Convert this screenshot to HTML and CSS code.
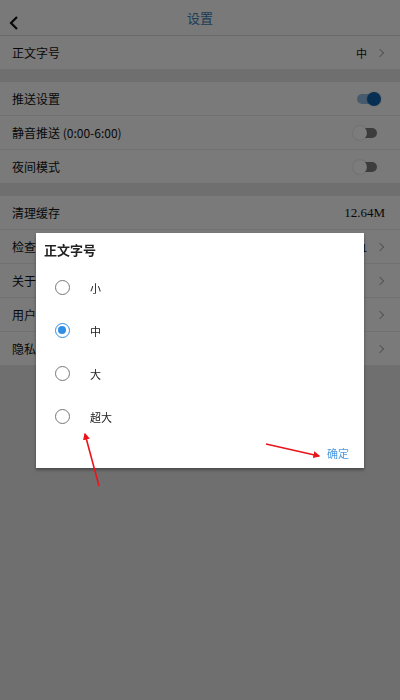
FILE: index.html
```html
<!DOCTYPE html>
<html lang="zh-CN">
<head>
    <meta charset="UTF-8">
    <title>设置</title>
    <meta name="viewport" content="width=device-width, initial-scale=1.0">
    <link rel="stylesheet" href="styles.css">
</head>
<body>
    <div class="page">
        <header class="topbar">
            <span class="back">
                <svg width="12" height="14" viewBox="0 0 12 14"><path d="M9 1 L3 7 L9 13" fill="none" stroke="#111" stroke-width="2.2"/></svg>
            </span>
            <h1>设置</h1>
        </header>

        <div class="group">
            <div class="row"><span>正文字号</span><span class="val">中</span><i class="chev"></i></div>
        </div>

        <div class="group">
            <div class="row"><span>推送设置</span><b class="switch on"></b></div>
            <div class="row"><span>静音推送 (0:00-6:00)</span><b class="switch"></b></div>
            <div class="row"><span>夜间模式</span><b class="switch"></b></div>
        </div>

        <div class="group">
            <div class="row"><span>清理缓存</span><span class="val num">12.64M</span></div>
            <div class="row"><span>检查更新</span><span class="val">V1.0.1</span><i class="chev"></i></div>
            <div class="row"><span>关于我们</span><i class="chev"></i></div>
            <div class="row"><span>用户协议</span><i class="chev"></i></div>
            <div class="row"><span>隐私政策</span><i class="chev"></i></div>
        </div>
    </div>

    <div class="mask"></div>

    <div class="dialog">
        <h2>正文字号</h2>
        <ul class="options">
            <li><i class="radio"></i>小</li>
            <li><i class="radio checked"></i>中</li>
            <li><i class="radio"></i>大</li>
            <li><i class="radio"></i>超大</li>
        </ul>
        <div class="actions"><span class="ok">确定</span></div>
    </div>

    <!-- 标注箭头 -->
    <svg class="marks" width="400" height="700" viewBox="0 0 400 700">
        <defs>
            <marker id="head" viewBox="0 0 10 10" refX="8" refY="5" markerWidth="7" markerHeight="7" orient="auto" markerUnits="userSpaceOnUse">
                <path d="M0 0 L10 5 L0 10 z" fill="#e8151b"/>
            </marker>
        </defs>
        <line x1="99" y1="486" x2="85" y2="434" stroke="#e8151b" stroke-width="1.6" marker-end="url(#head)"/>
        <line x1="266" y1="444" x2="319" y2="456" stroke="#e8151b" stroke-width="1.6" marker-end="url(#head)"/>
    </svg>
</body>
</html>
```

FILE: styles.css
```css
body {
    margin: 0;
    width: 400px;
    height: 700px;
    background-color: #dedede;
    font-family: "Noto Sans CJK SC", "Liberation Serif", serif;
    color: #111;
    overflow: hidden;
}
.page {
    background-color: #dedede;
}
.topbar {
    height: 35px;
    display: flex;
    align-items: center;
    justify-content: center;
    background-color: #f2f2f2;
    border-bottom: 1px solid #d2d2d2;
    position: relative;
}
.topbar .back {
    position: absolute;
    left: 8px;
    top: 11px;
}
.topbar h1 {
    margin: 0;
    font-size: 13px;
    font-weight: normal;
    color: #3a78ad;
}
.group {
    background-color: #f4f4f4;
    margin-bottom: 13px;
}
.row {
    height: 33px;
    display: flex;
    align-items: center;
    padding: 0 12px;
    font-size: 12px;
    border-bottom: 1px solid #e2e2e2;
}
.row:last-child {
    border-bottom: none;
}
.row span:first-child {
    flex: 1;
}
.row .val {
    font-size: 11px;
    margin-right: 10px;
}
.row .num {
    margin-right: 3px;
    font-family: "Liberation Serif", serif;
    font-size: 13px;
}
.chev {
    width: 5px;
    height: 5px;
    border-top: 1px solid #aaa;
    border-right: 1px solid #aaa;
    transform: rotate(45deg);
    margin-right: 5px;
}
.switch {
    width: 20px;
    height: 10px;
    border-radius: 5px;
    background-color: #7a7a7a;
    position: relative;
    margin-right: 11px;
}
.switch::after {
    content: "";
    position: absolute;
    left: -4px;
    top: -2px;
    width: 14px;
    height: 14px;
    border-radius: 50%;
    background-color: #f8f8f8;
    box-shadow: 0 0 2px rgba(0, 0, 0, 0.2);
}
.switch.on {
    background-color: #8db6db;
}
.switch.on::after {
    left: auto;
    right: -4px;
    background-color: #0e5fa8;
}
.mask {
    position: fixed;
    left: 0;
    top: 0;
    width: 400px;
    height: 700px;
    background-color: rgba(0, 0, 0, 0.5);
}
.dialog {
    position: absolute;
    left: 36px;
    top: 233px;
    width: 328px;
    height: 235px;
    background-color: #fff;
    box-shadow: 0 2px 3px rgba(0, 0, 0, 0.35);
}
.dialog h2 {
    margin: 0;
    padding: 7px 0 0 8px;
    font-size: 13px;
    font-weight: 600;
    color: #222;
}
.options {
    list-style: none;
    margin: 7px 0 0;
    padding: 0;
}
.options li {
    height: 43px;
    display: flex;
    align-items: center;
    font-size: 11px;
    color: #222;
}
.radio {
    box-sizing: border-box;
    width: 15px;
    height: 15px;
    border: 1.5px solid #777;
    border-radius: 50%;
    margin: 0 20px 0 19px;
    position: relative;
}
.radio.checked {
    border-color: #2f8ee6;
}
.radio.checked::after {
    content: "";
    position: absolute;
    left: 2px;
    top: 2px;
    width: 8px;
    height: 8px;
    border-radius: 50%;
    background-color: #2f8ee6;
}
.actions {
    display: flex;
    justify-content: flex-end;
    padding: 7px 15px 0 0;
}
.ok {
    font-size: 11px;
    color: #4a9be2;
}
.marks {
    position: absolute;
    left: 0;
    top: 0;
}
```
